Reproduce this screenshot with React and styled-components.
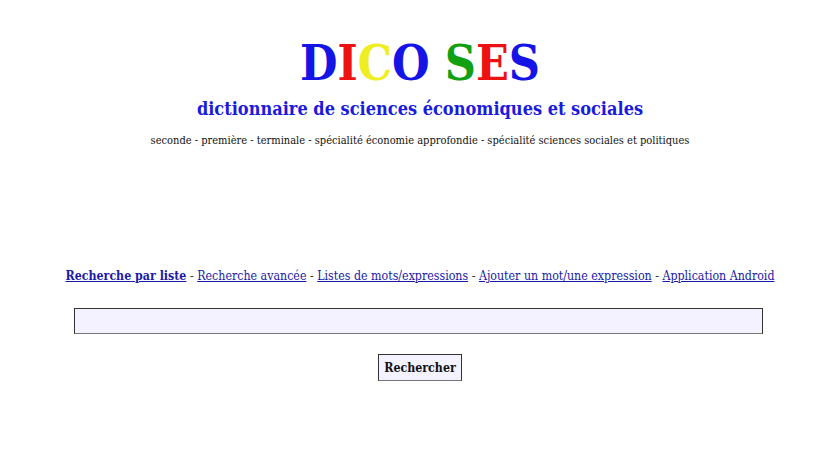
import styled, { createGlobalStyle } from 'styled-components';

const serif = '"DejaVu Serif Condensed", "DejaVu Serif", serif';

const GlobalStyle = createGlobalStyle`
  body {
    margin: 0;
    background: #ffffff;
    font-family: ${serif};
    font-stretch: condensed;
  }
`;

const Page = styled.div`
  width: 840px;
  height: 460px;
  display: flex;
  flex-direction: column;
  align-items: center;
  padding-top: 35px;
  box-sizing: border-box;
`;

const Title = styled.h1`
  margin: 0;
  font-size: 48px;
  line-height: 56px;
  font-weight: bold;
`;

const Letter = styled.span`
  color: ${({ $color }) => $color};
`;

const Subtitle = styled.h2`
  margin: 6px 0 0;
  font-size: 18px;
  line-height: 24px;
  font-weight: bold;
  color: #1a1ae0;
`;

const Levels = styled.p`
  margin: 12px 0 0;
  font-size: 11px;
  line-height: 16px;
  color: #111;
`;

const Nav = styled.nav`
  margin-top: 118px;
  font-size: 12.3px;
  line-height: 18px;
  color: #333;
`;

const Link = styled.a`
  color: #1a1aa8;
  text-decoration: underline;
  font-weight: ${({ $bold }) => ($bold ? 'bold' : 'normal')};
`;

const Form = styled.form`
  margin-top: 23px;
  display: flex;
  flex-direction: column;
  align-items: center;
  gap: 20px;
`;

const SearchInput = styled.input`
  width: 689px;
  height: 26px;
  margin-right: 4px;
  box-sizing: border-box;
  background: #f4f2fe;
  border: 1px solid #333;
  border-bottom-color: #777;
  padding: 0 4px;
  font-family: ${serif};
  font-stretch: condensed;
  font-size: 13px;
`;

const Button = styled.button`
  height: 27px;
  padding: 0 5px;
  background: #f4f2fe;
  border: 1px solid #333;
  border-bottom-color: #777;
  font-family: ${serif};
  font-stretch: condensed;
  font-weight: bold;
  font-size: 12.3px;
  color: #111;
`;

const title = [
  ['D', '#1414e6'],
  ['I', '#ee1111'],
  ['C', '#eeee22'],
  ['O', '#1414e6'],
  [' ', '#000'],
  ['S', '#11a011'],
  ['E', '#ee1111'],
  ['S', '#1414e6'],
];

const links = [
  ['Recherche par liste', true],
  ['Recherche avancée'],
  ['Listes de mots/expressions'],
  ['Ajouter un mot/une expression'],
  ['Application Android'],
];

const App = () => {
  return (
    <>
      <GlobalStyle />
      <Page>
        <Title>
          {title.map(([c, color], i) => (
            <Letter key={i} $color={color}>
              {c}
            </Letter>
          ))}
        </Title>
        <Subtitle>dictionnaire de sciences économiques et sociales</Subtitle>
        <Levels>
          seconde - première - terminale - spécialité économie approfondie - spécialité sciences sociales et politiques
        </Levels>
        <Nav>
          {links.map(([label, bold], i) => (
            <span key={label}>
              {i > 0 && ' - '}
              <Link href="#" $bold={bold}>
                {label}
              </Link>
            </span>
          ))}
        </Nav>
        <Form onSubmit={(e) => e.preventDefault()}>
          <SearchInput type="text" />
          <Button type="submit">Rechercher</Button>
        </Form>
      </Page>
    </>
  );
};

export default App;
